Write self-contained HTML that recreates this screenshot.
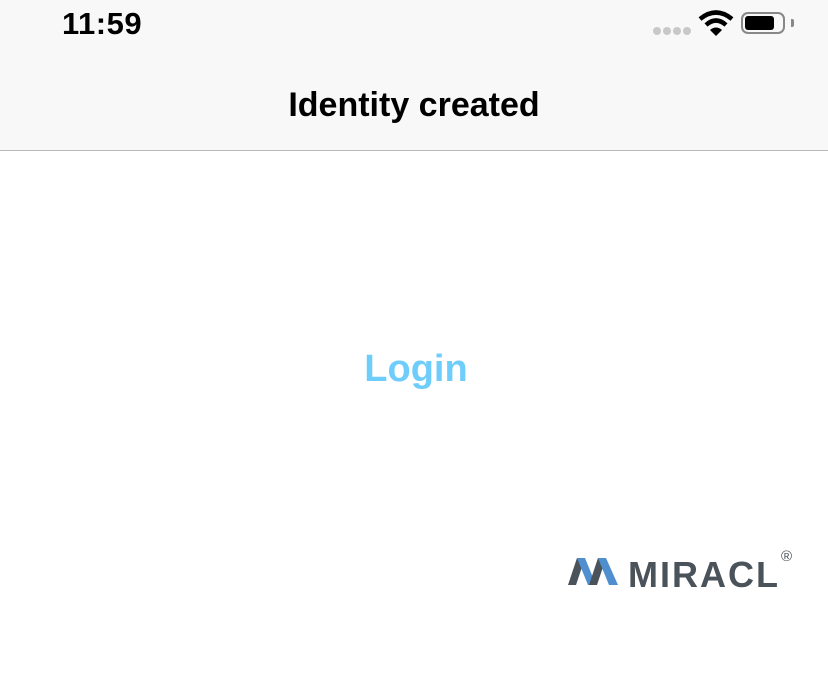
<!DOCTYPE html>
<html><head><style>
body{margin:0;width:828px;height:688px;background:#fff;font-family:"Liberation Sans",sans-serif;position:relative;overflow:hidden}
.top{position:absolute;left:0;top:0;width:828px;height:150px;background:#f8f8f8;border-bottom:1px solid #b8b8b8}
.time{position:absolute;left:62px;top:6px;font-size:31px;font-weight:600;letter-spacing:0.5px}
.title{position:absolute;left:0;width:828px;top:86px;text-align:center;font-size:34px;font-weight:600}
.login{position:absolute;left:2px;width:828px;top:348px;text-align:center;font-size:38px;font-weight:bold;color:#6fcdfb}
.dot{position:absolute;top:27px;width:8px;height:8px;border-radius:50%;background:#c8c8c8}
.mir{position:absolute;left:628px;top:554px;font-size:36px;font-weight:bold;color:#4a525a;letter-spacing:2px}
</style></head><body>
<div class="top">
<div class="time">11:59</div>
<div class="dot" style="left:653px"></div><div class="dot" style="left:663px"></div><div class="dot" style="left:673px"></div><div class="dot" style="left:683px"></div>
<svg style="position:absolute;left:698px;top:10px" width="36" height="26" viewBox="0 0 36 26"><path d="M2 9 Q18 -4 34 9" stroke="#000" stroke-width="4.5" fill="none"/><path d="M8 15 Q18 6 28 15" stroke="#000" stroke-width="4.5" fill="none"/><path d="M12 20 L18 26 L24 20 Q18 15 12 20Z" fill="#000"/></svg>
<div style="position:absolute;left:741px;top:12px;width:44px;height:22px;border:2px solid #888;border-radius:7px;box-sizing:border-box"></div>
<div style="position:absolute;left:745px;top:16px;width:29px;height:14px;background:#000;border-radius:3px"></div>
<div style="position:absolute;left:791px;top:19px;width:3px;height:8px;background:#888;border-radius:0 2px 2px 0"></div>
<div class="title">Identity created</div>
</div>
<div class="login">Login</div>
<svg style="position:absolute;left:568px;top:557px" width="54" height="29" viewBox="0 0 54 29"><polygon points="0,28 9,1 17,1 8,28" fill="#4a525a"/><polygon points="9,1 17,1 28,28 20,28" fill="#4f8fcf"/><polygon points="21,28 30,1 38,1 29,28" fill="#4a525a"/><polygon points="30,1 38,1 50,28 41,28" fill="#4f8fcf"/></svg>
<div class="mir">MIRACL</div>
<div style="position:absolute;left:781px;top:548px;font-size:15px;color:#4a525a">®</div>
</body></html>
